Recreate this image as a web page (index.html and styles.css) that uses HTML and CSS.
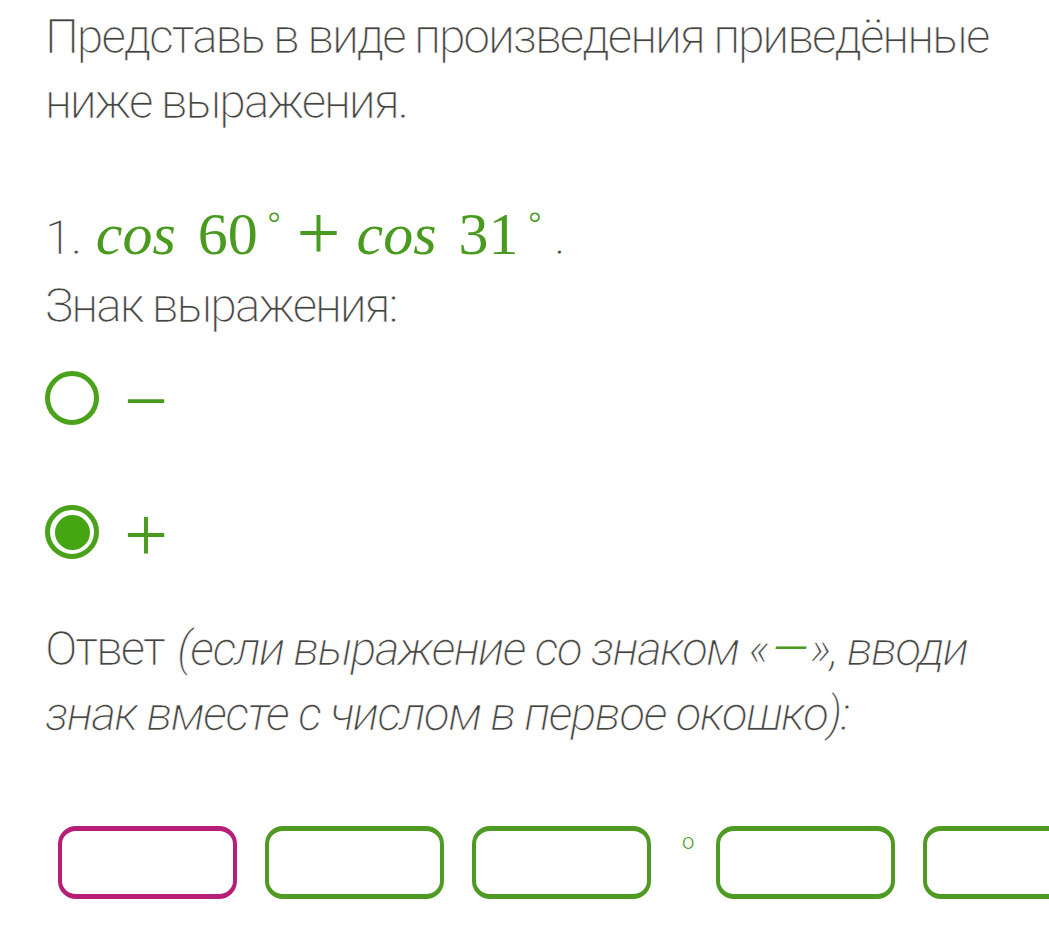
FILE: index.html
```html
<!DOCTYPE html>
<html lang="ru">
<head>
  <meta charset="UTF-8" />
  <title>Задание</title>
  <link rel="stylesheet" href="styles.css">
</head>
<body>
  <p class="task">Представь в виде произведения приведённые ниже выражения.</p>

  <div class="item">
    <div class="expr">1. <span class="math"><i>cos</i><span class="num">60</span><sup>°</sup><span class="op">+</span><i>cos</i><span class="num">31</span><sup>°</sup></span> .</div>
    <div class="label">Знак выражения:</div>
  </div>

  <div class="options">
    <label class="option">
      <span class="radio"></span>
      <span class="sign">−</span>
    </label>
    <label class="option">
      <span class="radio checked"><span class="dot"></span></span>
      <span class="sign">+</span>
    </label>
  </div>

  <p class="answer">Ответ <em>(если выражение со знаком «<span class="dash">—</span>», вводи знак вместе с числом в первое окошко):</em></p>

  <div class="inputs">
    <div class="box active"></div>
    <div class="box"></div>
    <div class="box"></div>
    <span class="deg">o</span>
    <div class="box"></div>
    <div class="box"></div>
  </div>
</body>
</html>
```

FILE: styles.css
```css
body {
  margin: 0;
  padding: 0 45px;
  background: #fff;
  color: #444440;
  font-family: "Roboto Light", Roboto, "Noto Sans", sans-serif;
  font-weight: 300;
  font-size: 48px;
  overflow: hidden;
}

p {
  margin: 0;
}

/* roboto here has no light face, so thin the strokes a little */
.task,
.expr,
.label,
.answer {
  -webkit-text-stroke: 0.7px #fff;
}

.task {
  line-height: 65px;
  padding-top: 4px;
  letter-spacing: -2.2px;
}

.item {
  margin-top: 69px;
}

.expr {
  line-height: 70px;
  letter-spacing: -1px;
}

.math {
  color: #4a9a20;
  font-family: "Liberation Serif", "DejaVu Serif", serif;
  font-size: 58px;
  font-weight: 400;
  line-height: 40px;
  letter-spacing: 0;
  margin-left: 4px;
  -webkit-text-stroke: 0;
}

.math i {
  font-size: 60px;
}

.num {
  font-size: 60px;
  margin-left: 22px;
}

.math sup {
  font-size: 32px;
  vertical-align: 20px;
  line-height: 0;
  margin: 0 2px 0 10px;
}

.op {
  font-size: 78px;
  margin: 0 16px 0 14px;
  position: relative;
  top: 5px;
}

.label {
  line-height: 65px;
  letter-spacing: -2.2px;
}

.options {
  margin-top: 33px;
}

.option {
  display: flex;
  align-items: center;
  gap: 25px;
  height: 54px;
  margin-bottom: 80px;
}

.option:last-child {
  margin-bottom: 0;
}

.radio {
  box-sizing: border-box;
  width: 54px;
  height: 54px;
  border: 5px solid #4aa21a;
  border-radius: 50%;
  display: flex;
  align-items: center;
  justify-content: center;
}

.dot {
  width: 35px;
  height: 35px;
  border-radius: 50%;
  background: #45a512;
}

.sign {
  color: #4a9a20;
  font-family: "Liberation Serif", "DejaVu Serif", serif;
  font-weight: 400;
  font-size: 78px;
  line-height: 54px;
  margin-top: 6px;
}

.answer {
  margin-top: 57px;
  line-height: 65px;
  letter-spacing: -2.2px;
}

.answer em {
  font-style: italic;
  letter-spacing: -1.8px;
  margin-left: 4px;
}

.dash {
  color: #4a9a20;
  margin: 0 4px;
  -webkit-text-stroke: 0;
}

.inputs {
  display: flex;
  align-items: flex-start;
  gap: 28px;
  margin-top: 80px;
  margin-left: 13px;
  white-space: nowrap;
}

.box {
  flex: none;
  box-sizing: border-box;
  width: 179px;
  height: 73px;
  border: 4px solid #4f9a22;
  border-top-width: 5px;
  border-bottom-width: 5px;
  border-radius: 18px;
}

.box.active {
  border-color: #b71f76;
}

.deg {
  color: #4a9a20;
  font-size: 22px;
  line-height: 22px;
  margin: 5px -6px 0 3px;
}
```
